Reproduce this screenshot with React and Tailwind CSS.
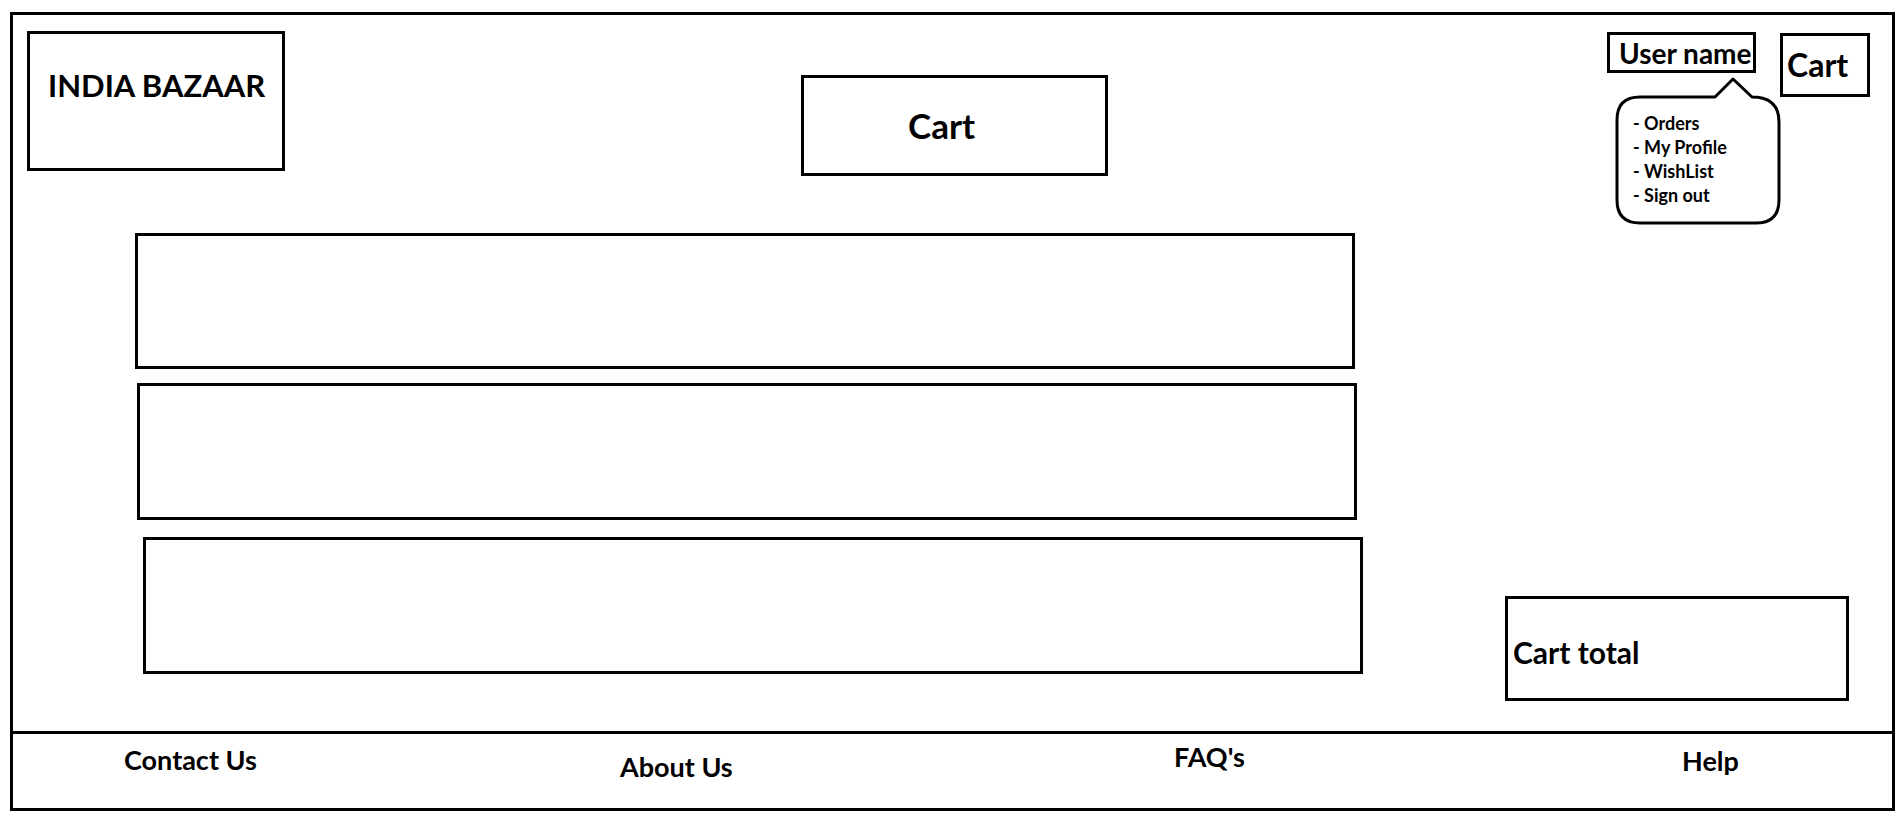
export default function App() {
  const font = { fontFamily: "Lato, 'Open Sans', sans-serif" };
  return (
    <div className="w-[1903px] h-[825px] bg-white text-black font-bold" style={font}>
      <div className="ml-[10px] pt-[12px]">
        <div className="w-[1885px] h-[799px] border-[3px] border-black flex flex-col">
          {/* main area */}
          <div className="h-[716px] border-b-[3px] border-black box-content">
            {/* header */}
            <div className="flex items-start">
              <div className="ml-[14px] mt-[16px] w-[258px] h-[140px] border-[3px] border-black pl-[18px] pt-[33px] text-[31px] leading-[37px]">
                INDIA BAZAAR
              </div>
              <div className="ml-[516px] mt-[60px] w-[307px] h-[101px] border-[3px] border-black flex items-center pl-[104px] text-[35px]">
                Cart
              </div>
              <div className="relative ml-[499px] mt-[17px] w-[149px] h-[41px] border-[3px] border-black flex items-center pl-[9px] text-[28px] leading-none">
                User name
                <div className="absolute left-[5px] top-[41px] w-[167px] h-[150px]">
                  <svg width="167" height="150" viewBox="0 0 167 150" className="absolute left-0 top-0">
                    <path
                      d="M 2 44 Q 2 21 25 21 L 100 21 L 118 3 L 137 21 Q 164 21 164 46 L 164 124 Q 164 147 141 147 L 25 147 Q 2 147 2 124 Z"
                      fill="white"
                      stroke="black"
                      strokeWidth="3"
                      strokeLinejoin="round"
                    />
                  </svg>
                  <ul className="absolute left-[18px] top-[35px] text-[18px] leading-[24px]">
                    <li>- Orders</li>
                    <li>- My Profile</li>
                    <li>- WishList</li>
                    <li>- Sign out</li>
                  </ul>
                </div>
              </div>
              <div className="ml-[24px] mt-[18px] w-[90px] h-[64px] border-[3px] border-black flex items-center pl-[4px] text-[32px] leading-none">
                Cart
              </div>
            </div>
            {/* body */}
            <div className="flex items-start mt-[57px]">
              <div className="w-[1350px] flex flex-col">
                <div className="ml-[122px] w-[1220px] h-[136px] border-[3px] border-black"></div>
                <div className="ml-[124px] mt-[14px] w-[1220px] h-[137px] border-[3px] border-black"></div>
                <div className="ml-[130px] mt-[17px] w-[1220px] h-[137px] border-[3px] border-black"></div>
              </div>
              <div className="ml-[142px] mt-[363px] w-[344px] h-[105px] border-[3px] border-black flex items-center pl-[5px] pt-[7px] text-[30px] leading-none">
                Cart total
              </div>
            </div>
          </div>
          {/* footer */}
          <div className="h-[74px] flex items-start text-[27px] leading-[32px]">
            <div className="w-[607px] pl-[111px] mt-[10px]">Contact Us</div>
            <div className="w-[554px] mt-[17px]">About Us</div>
            <div className="w-[508px] mt-[7px]">FAQ's</div>
            <div className="mt-[11px]">Help</div>
          </div>
        </div>
      </div>
    </div>
  );
}
